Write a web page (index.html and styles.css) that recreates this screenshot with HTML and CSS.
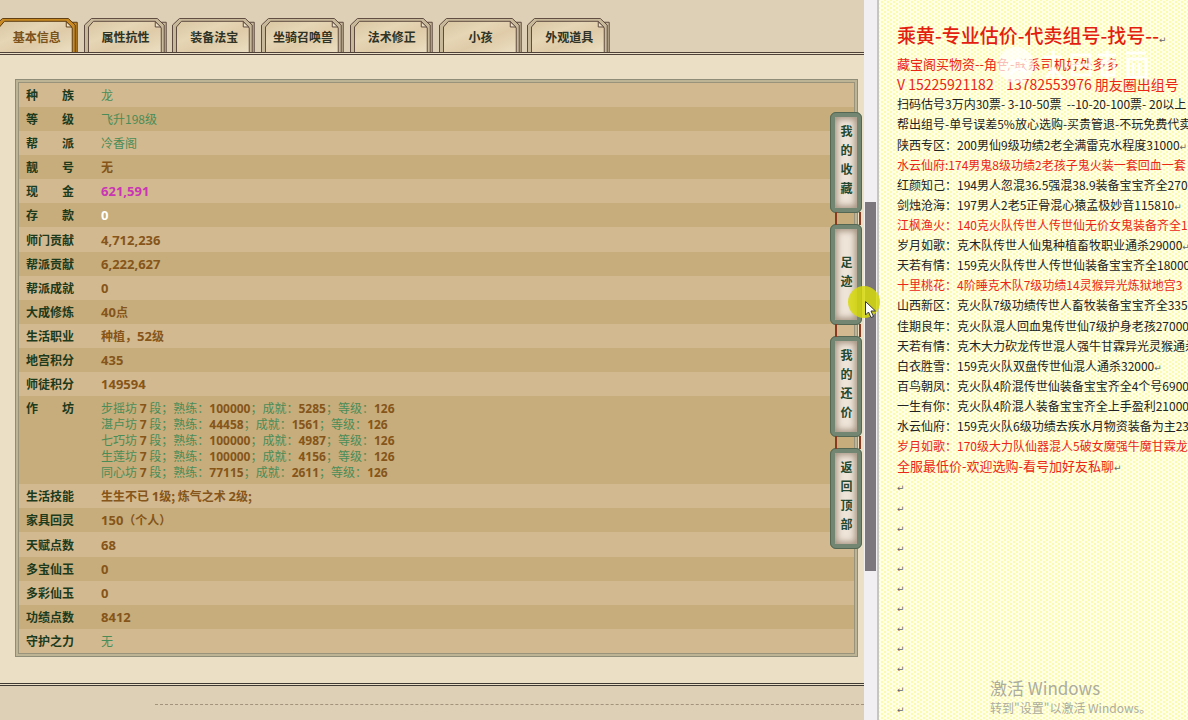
FILE: index.html
```html
<!DOCTYPE html>
<html lang="zh-CN">

<head>
    <meta charset="UTF-8">
    <meta name="viewport" content="width=device-width, initial-scale=1.0">
    <title>角色基本信息</title>
    <link rel="stylesheet" href="styles.css">
</head>

<body>

    <!-- Shared shapes -->
    <svg class="defs" width="0" height="0" aria-hidden="true">
        <defs>
            <linearGradient id="paper" x1="0" y1="0" x2="1" y2="1">
                <stop offset="0" stop-color="#d9c6a2" />
                <stop offset="0.35" stop-color="#e6d6b5" />
                <stop offset="0.6" stop-color="#dfcba8" />
                <stop offset="1" stop-color="#ebdfc2" />
            </linearGradient>
            <symbol id="tab" viewBox="0 0 84 36" preserveAspectRatio="none">
                <path class="frame" d="M76.500 36V4.500H82.500V36" />
                <path class="frame" d="M0.500 36V7.500L7.500 0.500H73.500L80.500 7.500V36" />
                <path class="sheet" d="M4.500 36V9.500L9.500 3.500H71.500L77.500 10.500V36" />
                <path class="fold" d="M71.500 4V9.500H77z" />
            </symbol>
        </defs>
    </svg>

    <div class="screen">
        <main class="game">
            <nav class="tabs">
                <button type="button" class="tab active"><svg><use href="#tab" /></svg><span>基本信息</span></button>
                <button type="button" class="tab"><svg><use href="#tab" /></svg><span>属性抗性</span></button>
                <button type="button" class="tab"><svg><use href="#tab" /></svg><span>装备法宝</span></button>
                <button type="button" class="tab"><svg><use href="#tab" /></svg><span>坐骑召唤兽</span></button>
                <button type="button" class="tab"><svg><use href="#tab" /></svg><span>法术修正</span></button>
                <button type="button" class="tab"><svg><use href="#tab" /></svg><span>小孩</span></button>
                <button type="button" class="tab"><svg><use href="#tab" /></svg><span>外观道具</span></button>
            </nav>

            <section class="content">
                <div class="panel">
                    <table class="info">
                        <tr><th scope="row">种 族</th><td class="green">龙</td></tr>
                        <tr><th scope="row">等 级</th><td class="green">飞升198级</td></tr>
                        <tr><th scope="row">帮 派</th><td class="green">冷香阁</td></tr>
                        <tr><th scope="row">靓 号</th><td>无</td></tr>
                        <tr><th scope="row">现 金</th><td class="cash"><b>621,591</b></td></tr>
                        <tr><th scope="row">存 款</th><td class="deposit"><b>0</b></td></tr>
                        <tr><th scope="row">师门贡献</th><td><b>4,712,236</b></td></tr>
                        <tr><th scope="row">帮派贡献</th><td><b>6,222,627</b></td></tr>
                        <tr><th scope="row">帮派成就</th><td><b>0</b></td></tr>
                        <tr><th scope="row">大成修炼</th><td><b>40</b>点</td></tr>
                        <tr><th scope="row">生活职业</th><td>种植，<b>52</b>级</td></tr>
                        <tr><th scope="row">地宫积分</th><td><b>435</b></td></tr>
                        <tr><th scope="row">师徒积分</th><td><b>149594</b></td></tr>
                        <tr class="workshop">
                            <th scope="row">作 坊</th>
                            <td class="green">
                                步摇坊 <b>7</b> 段；熟练：<b>100000</b>；成就：<b>5285</b>；等级：<b>126</b><br>
                                湛卢坊 <b>7</b> 段；熟练：<b>44458</b>；成就：<b>1561</b>；等级：<b>126</b><br>
                                七巧坊 <b>7</b> 段；熟练：<b>100000</b>；成就：<b>4987</b>；等级：<b>126</b><br>
                                生莲坊 <b>7</b> 段；熟练：<b>100000</b>；成就：<b>4156</b>；等级：<b>126</b><br>
                                同心坊 <b>7</b> 段；熟练：<b>77115</b>；成就：<b>2611</b>；等级：<b>126</b>
                            </td>
                        </tr>
                        <tr><th scope="row">生活技能</th><td>生生不已 <b>1</b>级; 炼气之术 <b>2</b>级;</td></tr>
                        <tr><th scope="row">家具回灵</th><td><b>150</b>（个人）</td></tr>
                        <tr><th scope="row">天赋点数</th><td><b>68</b></td></tr>
                        <tr><th scope="row">多宝仙玉</th><td><b>0</b></td></tr>
                        <tr><th scope="row">多彩仙玉</th><td><b>0</b></td></tr>
                        <tr><th scope="row">功绩点数</th><td><b>8412</b></td></tr>
                        <tr><th scope="row">守护之力</th><td class="green">无</td></tr>
                    </table>
                </div>
            </section>

            <footer class="bottom"></footer>

            <!-- Floating side menu -->
            <nav class="side-menu">
                <a href="#">我的收藏</a>
                <a href="#">足迹</a>
                <a href="#">我的还价</a>
                <a href="#">返回顶部</a>
            </nav>
        </main>

        <div class="scrollbar"><div class="thumb"></div></div>

        <!-- Price list document -->
        <aside class="doc">
            <h1>乘黄-专业估价-代卖组号-找号--<i>↵</i></h1>
            <p class="red medium">藏宝阁买物资--角色-联系司机好处多多</p>
            <p class="red large">V 15225921182 &nbsp;&nbsp; 13782553976 朋友圈出组号</p>
            <p>扫码估号3万内30票- 3-10-50票 &nbsp;--10-20-100票- 20以上</p>
            <p>帮出组号-单号误差5%放心选购-买贵管退-不玩免费代卖<i>↵</i></p>
            <p>陕西专区：200男仙9级功绩2老全满雷克水程度31000<i>↵</i></p>
            <p class="red">水云仙府:174男鬼8级功绩2老孩子鬼火装一套回血一套</p>
            <p>红颜知己：194男人忽混36.5强混38.9装备宝宝齐全270</p>
            <p>剑烛沧海：197男人2老5正骨混心猿孟极妙音115810<i>↵</i></p>
            <p class="red">江枫渔火：140克火队传世人传世仙无价女鬼装备齐全10</p>
            <p>岁月如歌：克木队传世人仙鬼种植畜牧职业通杀29000<i>↵</i></p>
            <p>天若有情：159克火队传世人传世仙装备宝宝齐全18000<i>↵</i></p>
            <p class="red">十里桃花：4阶睡克木队7级功绩14灵猴异光炼狱地宫3</p>
            <p>山西新区：克火队7级功绩传世人畜牧装备宝宝齐全3350</p>
            <p>佳期良年：克火队混人回血鬼传世仙7级护身老孩27000<i>↵</i></p>
            <p>天若有情：克木大力砍龙传世混人强牛甘霖异光灵猴通杀</p>
            <p>白衣胜雪：159克火队双盘传世仙混人通杀32000<i>↵</i></p>
            <p>百鸟朝凤：克火队4阶混传世仙装备宝宝齐全4个号6900</p>
            <p>一生有你：克火队4阶混人装备宝宝齐全上手盈利21000<i>↵</i></p>
            <p>水云仙府：159克火队6级功绩去疾水月物资装备为主23</p>
            <p class="red">岁月如歌：170级大力队仙器混人5破女魔强牛魔甘霖龙</p>
            <p class="red medium">全服最低价-欢迎选购-看号加好友私聊<i>↵</i></p>
            <p><i>↵</i></p>
            <p><i>↵</i></p>
            <p><i>↵</i></p>
            <p><i>↵</i></p>
            <p><i>↵</i></p>
            <p><i>↵</i></p>
            <p><i>↵</i></p>
            <p><i>↵</i></p>
            <p><i>↵</i></p>
            <p><i>↵</i></p>
            <p><i>↵</i></p>
            <p><i>↵</i></p>

            <svg class="stamp" width="160" height="44" viewBox="0 0 160 44" aria-hidden="true">
                <circle cx="22" cy="22" r="18" fill="#fff" fill-opacity="0.7" />
                <path d="M12 28c2-12 16-14 22-5M16 32c5-8 12-7 16-3" stroke="#fff" stroke-width="3" fill="none" />
                <g fill="none" stroke="#fff" stroke-width="3" stroke-opacity="0.85">
                    <path d="M50 14h18M59 8v28M52 36l7-12 9 12" />
                    <path d="M78 12h18v20H78zM78 22h18" />
                    <path d="M104 12h18M108 18h12v14h-12zM113 8v28" />
                    <path d="M132 10h20M134 16h18v18h-18zM139 20v12M145 20v12" />
                </g>
            </svg>

            <div class="activate">
                <strong>激活 Windows</strong>
                <span>转到"设置"以激活 Windows。</span>
            </div>
        </aside>
    </div>

    <!-- Highlighted mouse pointer -->
    <svg class="pointer" width="34" height="36" viewBox="0 0 34 36" aria-hidden="true">
        <circle cx="16" cy="17" r="16" fill="#d6d80c" fill-opacity="0.85" />
        <path d="M17.500 16.500V30l3-3 2.500 5.500 2.500-1-2.500-5.500h4.500z" fill="#fff" stroke="#333" />
    </svg>

</body>

</html>
```

FILE: styles.css
```css
* {
    box-sizing: border-box;
}

body {
    margin: 0;
    font-family: "Noto Sans CJK SC", sans-serif;
    font-size: 12px;
    color: #222;
}

.defs {
    position: absolute;
}

.screen {
    display: grid;
    grid-template-columns: minmax(0, 1fr) 15px 309px;
    height: 100vh;
    min-height: 720px;
    overflow: hidden;
}

/* Game page */
.game {
    position: relative;
    display: flex;
    flex-direction: column;
    background: #ddd0b6;
    overflow: hidden;
}

.tabs {
    display: flex;
    gap: 5px;
    padding-top: 18px;
    margin-left: -5px;
    max-width: 616px;
}

.tab {
    flex: 1;
    display: grid;
    height: 34px;
    padding: 0;
    border: none;
    background: none;
    font: bold 12px/18px "Noto Sans CJK SC", sans-serif;
    color: #2f3326;
    cursor: pointer;
}

.tab svg,
.tab span {
    grid-area: 1 / 1;
}

.tab svg {
    width: 100%;
    height: 34px;
    fill: #c9b99b;
    stroke: #5b463c;
}

.tab span {
    padding-top: 10px;
}

.sheet {
    fill: url(#paper);
}

.fold {
    fill: #efe4c9;
}

.tab.active {
    color: #7a521c;
}

.tab.active svg {
    fill: #c98a24;
    stroke: #5a3a12;
}

.content {
    padding: 24px 6px 26px 15px;
    border-top: 3px double #4f4038;
    border-bottom: 3px double #3f3a33;
    background: #ebe0c5;
}

.panel {
    border: 1px solid #8f8d78;
    padding: 2px;
    background: #bcb495;
}

.info {
    width: 100%;
    height: 572px;
    border: 1px solid #98937a;
    border-collapse: separate;
    border-spacing: 0;
    background: #d3b98f;
}

.info tr:nth-child(even) {
    background: #c7ad7b;
}

.info th,
.info td {
    height: 24px;
    padding: 0;
    line-height: 16px;
}

.info th {
    width: 82px;
    padding: 0 27px 0 7px;
    color: #1d3a1c;
    text-align: justify;
    text-align-last: justify;
    white-space: nowrap;
}

.info td {
    color: #85551a;
    font-weight: bold;
    text-align: left;
}

.info b {
    font-family: "Noto Sans", sans-serif;
    font-size: 13px;
    font-weight: bold;
    line-height: 0;
    color: #85551a;
}

.info .green {
    color: #4a8c58;
    font-weight: 400;
}

.info .cash b {
    color: #c935b4;
}

.info .deposit b {
    color: #fff;
}

.info .workshop th,
.info .workshop td {
    height: 88px;
    padding-top: 4px;
    vertical-align: top;
}

.info .workshop b {
    font-size: 12px;
}

.bottom {
    margin: 18px 0 0 155px;
    border-top: 1px dashed #a3937c;
}

/* Side menu */
.side-menu {
    position: absolute;
    top: 112px;
    right: 2px;
    display: flex;
    flex-direction: column;
    gap: 11px;
}

.side-menu a {
    position: relative;
    display: flex;
    align-items: center;
    justify-content: center;
    width: 32px;
    height: 101px;
    border: 5px solid #728672;
    border-radius: 6px;
    outline: 1px solid #536753;
    outline-offset: -1px;
    background: #eee4d8;
    box-shadow: inset 0 0 6px 2px #a3917f;
    color: #24472f;
    font-size: 12px;
    font-weight: bold;
    line-height: 20px;
    letter-spacing: 7px;
    text-decoration: none;
    writing-mode: vertical-rl;
}

/* Cords between the plates */
.side-menu a + a::before {
    content: "";
    position: absolute;
    top: -17px;
    left: 0;
    width: 22px;
    height: 13px;
    border-left: 2px solid #8b3a22;
    border-right: 2px solid #8b3a22;
}

.scrollbar {
    padding: 202px 1px 0 1px;
    border-right: 2px solid #c6c6bd;
    background: #f1eff2;
}

.thumb {
    height: 369px;
    background: #7b777c;
}

/* Document */
.doc {
    position: relative;
    display: flex;
    flex-direction: column;
    justify-content: space-between;
    padding: 20px 0 2px 18px;
    overflow: hidden;
    white-space: nowrap;
    background-color: #ffffe4;
    background-image: radial-gradient(#fafab4 1px, transparent 1px), radial-gradient(#fafab4 1px, transparent 1px);
    background-position: 0 0, 3px 2px;
    background-size: 6px 4px;
}

.doc h1 {
    margin: 0 0 4px;
    font-size: 19px;
    font-weight: 500;
    line-height: 30px;
    color: #e3200f;
}

.doc p {
    margin: 0;
    line-height: 20px;
}

.doc i {
    font-family: "DejaVu Sans", sans-serif;
    font-size: 9px;
    font-style: normal;
    font-weight: 400;
    line-height: 0;
    color: #666;
}

.doc .red {
    color: #ea2616;
}

.doc .medium {
    font-size: 13px;
}

.doc .large {
    font-size: 14px;
}

.stamp {
    position: absolute;
    top: 43px;
    left: 115px;
}

.activate {
    position: absolute;
    left: 111px;
    bottom: 3px;
    display: flex;
    flex-direction: column;
    color: #acac9c;
}

.activate strong {
    font-size: 17px;
    font-weight: 400;
    line-height: 22px;
}

.activate span {
    font-size: 12px;
    line-height: 18px;
}

.pointer {
    position: absolute;
    top: 285px;
    right: 306px;
}
```
